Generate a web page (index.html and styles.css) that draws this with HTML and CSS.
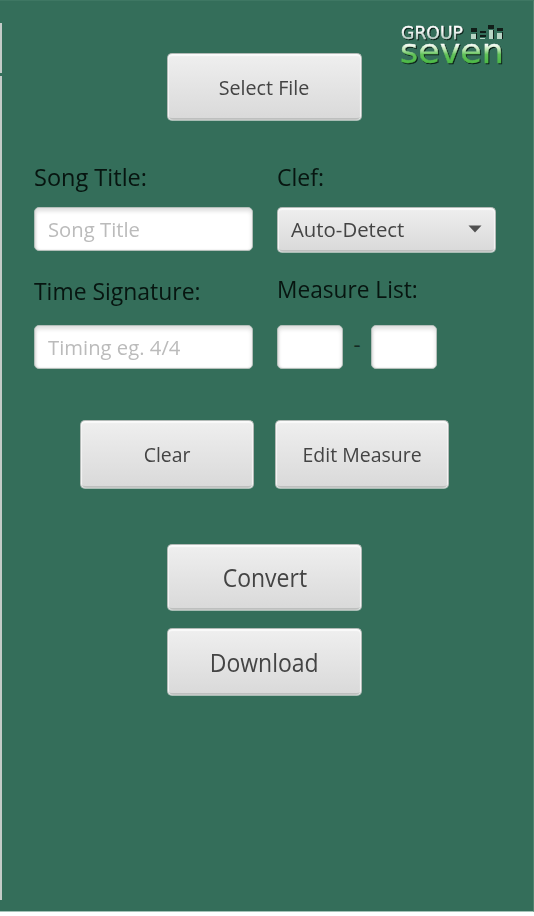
FILE: index.html
```html
<!DOCTYPE html>
<html lang="en">
<head>
<meta charset="utf-8">
<title>Group Seven</title>
<link rel="stylesheet" href="styles.css">
</head>
<body>
<main class="panel">
  <div class="rail"><i class="rail-top"></i><i class="rail-bottom"></i></div>
  <svg class="logo" width="116" height="56" viewBox="0 0 116 56" role="img" aria-label="Group Seven">
    <defs>
      <linearGradient id="green" gradientUnits="userSpaceOnUse" x1="0" y1="25" x2="0" y2="44">
        <stop offset="0" stop-color="#fff"/><stop offset=".3" stop-color="#b9e6b0"/><stop offset=".55" stop-color="#62c25a"/><stop offset="1" stop-color="#4bb845"/>
      </linearGradient>
      <linearGradient id="silver" gradientUnits="userSpaceOnUse" x1="0" y1="7" x2="0" y2="20">
        <stop offset=".3" stop-color="#fff"/><stop offset="1" stop-color="#b9cec6"/>
      </linearGradient>
    </defs>
    <text class="logo-text" x="3" y="20" font-size="17.500" textLength="62" lengthAdjust="spacingAndGlyphs" fill="url(#silver)" stroke="url(#silver)">GROUP</text>
    <text class="logo-text" x="2" y="44" font-size="33" textLength="104" lengthAdjust="spacingAndGlyphs" fill="url(#green)" stroke="url(#green)">seven</text>
    <g fill="#111e19">
      <path d="M73 9h6v4h-6zM82 12h6v2h-6zM82 16h6v2h-6zM90 6h6v4h-6zM99 9h6v3h-6z"/>
      <path d="M73 15h5v5h-5zM82 19h5v1h-5zM91 11h5v9h-5zM99 14h5v6h-5z" fill="#b8d4c5"/>
      <path d="M78 14h1v6h-1zM95 11h1v9h-1zM104 13h1v7h-1z"/>
    </g>
  </svg>

  <button class="btn select"><span>Select File</span></button>

  <form class="fields">
    <label class="l-song"><span>Song Title:</span></label>
    <label class="l-clef"><span>Clef:</span></label>
    <div class="input"><span class="p-song">Song Title</span></div>
    <div class="combo"><span>Auto-Detect</span><svg width="14" height="8" viewBox="0 0 14 8"><path d="M.5.5h13L7 7.500z" fill="#505050"/></svg></div>
    <label class="l-time"><span>Time Signature:</span></label>
    <label class="l-measure"><span>Measure List:</span></label>
    <div class="input"><span class="p-time">Timing eg. 4/4</span></div>
    <div class="range"><div class="input"></div><b class="dash">-</b><div class="input"></div></div>
  </form>

  <div class="pair">
    <button class="btn clear"><span>Clear</span></button>
    <button class="btn edit"><span>Edit Measure</span></button>
  </div>
  <button class="btn convert"><span>Convert</span></button>
  <button class="btn download"><span>Download</span></button>
</main>
</body>
</html>
```
FILE: styles.css
```css
* { box-sizing: border-box; }
body { margin: 0; background: #fff; font-family: "Open Sans", "Noto Sans", sans-serif; }
.panel {
  position: relative;
  width: 534px;
  height: 912px;
  padding-top: 52px;
  background: #346e5a;
  border-top: 1px solid #3e7763;
  border-right: 1px solid #51836f;
  border-bottom: 1px solid #a4c2b7;
  display: flex;
  flex-direction: column;
}
.rail { position: absolute; left: 0; top: 22px; width: 2px; height: 877px; display: flex; flex-direction: column; gap: 3px; }
.rail i { width: 1.5px; background: #c4cbc8; }
.rail-top { height: 50px; }
.rail-bottom { flex: 1; }
.logo { position: absolute; left: 398px; top: 18px; font-family: "DejaVu Sans", sans-serif; }
.logo-text { stroke-width: .4px; filter: drop-shadow(1px 1px .4px #0b2018); }
span { display: inline-block; white-space: nowrap; transform-origin: left center; }
.btn, .combo {
  border: 1px solid #b3bab7;
  border-bottom-color: #a9bdb5;
  border-radius: 5px;
  background: linear-gradient(#efefef, #d9d9d9);
  box-shadow: inset 0 2px 1px #fafafa, inset 1px 0 1px #f4f4f4, inset -1px 0 1px #f4f4f4, inset 0 -2px 0 #bdbfbe;
  color: #444;
  font-family: inherit;
}
.btn { display: flex; align-items: center; justify-content: center; width: 195px; height: 68px; margin-left: 167px; padding: 0; font-size: 20px; flex: none; }
.btn span { transform-origin: center; }
.select span { transform: scaleX(.985); }
.clear span { transform: scaleX(.97); }
.edit span { transform: scaleX(.975); }
.convert span { transform: scaleX(.92); }
.download span { transform: scaleX(.92); }
.fields { display: grid; grid-template-columns: 219px 219px; column-gap: 24px; grid-template-rows: 44px 45px 73px 45px; margin: 42px 0 0 34px; }
label { color: #071510; font-size: 24px; line-height: 32px; }
.l-song, .l-clef { margin-top: -2px; }
.l-song span { transform: scaleX(.98); }
.l-clef span { transform: scaleX(.96); }
.l-time { padding-top: 23px; }
.l-time span { transform: scaleX(.955); }
.l-measure { padding-top: 21px; }
.l-measure span { transform: scaleX(.945); }
.input { height: 44px; border: 1px solid #b4bfba; border-radius: 5px; background: #fff; box-shadow: inset 0 3px 4px #dedede, inset 1px 0 2px #ddd; padding-left: 13px; font-size: 20px; line-height: 44px; color: #bbb; }
.p-song, .p-time { transform: scaleX(1.013); }
.combo { height: 46px; padding: 0 13px 2px; display: flex; align-items: center; justify-content: space-between; font-size: 20px; }
.combo span { transform: scaleX(1.018); }
.range { display: flex; }
.range .input { width: 66px; }
.dash { width: 28px; text-align: center; color: #142b23; font-size: 22px; font-weight: 400; line-height: 36px; }
.pair { display: flex; gap: 21px; margin: 50px 0 0 80px; }
.pair .btn { width: 174px; height: 69px; margin: 0; }
.convert { height: 67px; margin-top: 55px; padding-bottom: 2px; }
.download { height: 68px; margin-top: 17px; }
.convert, .download { font-size: 25px; }
```
